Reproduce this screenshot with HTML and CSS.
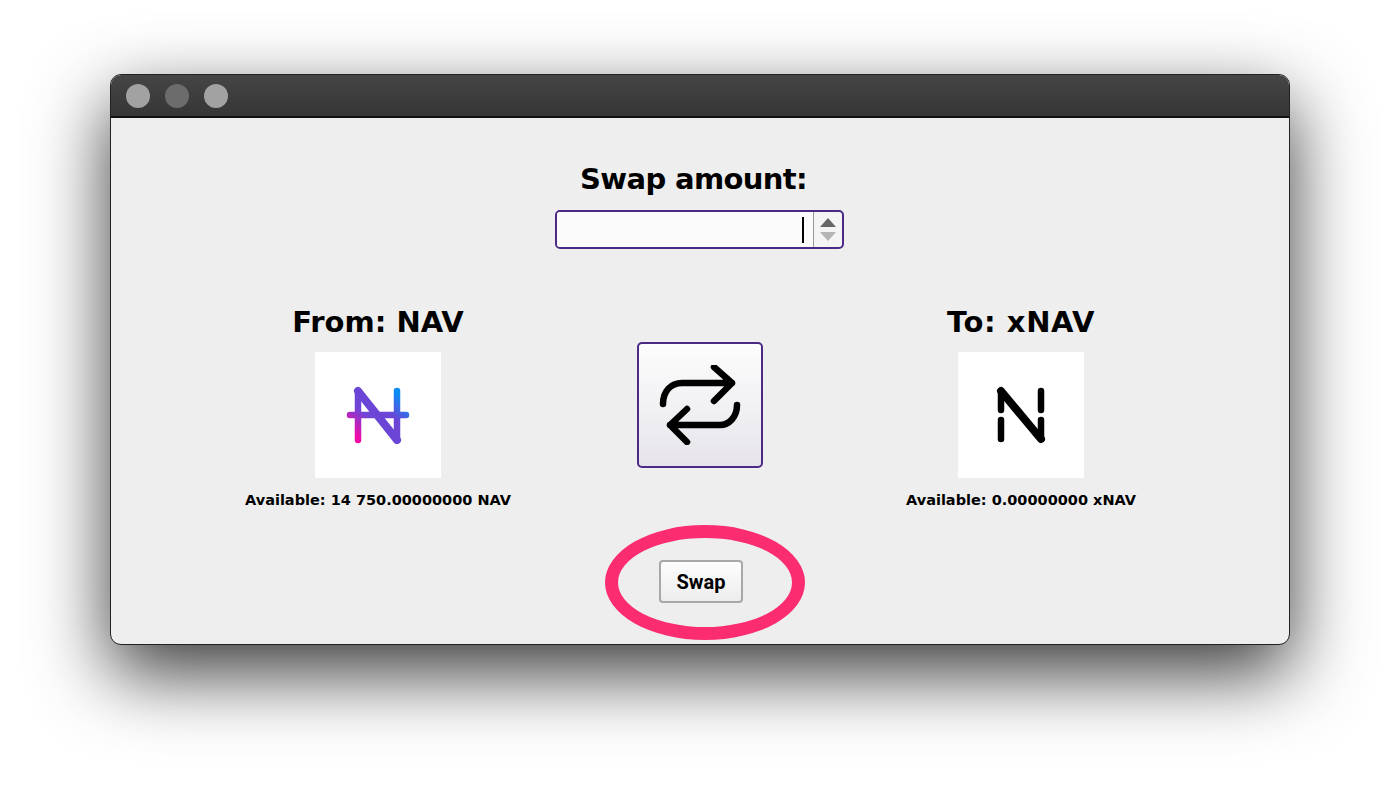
FILE: index.html
```html
<!DOCTYPE html>
<html lang="en">
<head>
  <meta charset="UTF-8" />
  <meta name="viewport" content="width=device-width, initial-scale=1.0" />
  <title>Swap</title>
  <link rel="stylesheet" href="styles.css">
</head>
<body>
  <div class="window">
    <div class="titlebar">
      <span class="dot"></span>
      <span class="dot dot-dim"></span>
      <span class="dot"></span>
    </div>
    <div class="content">
      <h2 class="amount-title">Swap amount:</h2>
      <div class="spinbox">
        <div class="spin-input"><span class="caret"></span></div>
        <div class="spin-arrows">
          <span class="arrow-up"></span>
          <span class="arrow-down"></span>
        </div>
      </div>

      <div class="coins">
        <div class="coin">
          <h2>From: NAV</h2>
          <div class="coin-logo">
            <svg width="64" height="58" viewBox="0 0 64 58">
              <defs>
                <linearGradient id="nav-grad" x1="0" y1="1" x2="1" y2="0">
                  <stop offset="0.1" stop-color="#f00aa8" />
                  <stop offset="0.4" stop-color="#6f45d6" />
                  <stop offset="0.62" stop-color="#6b45d6" />
                  <stop offset="0.9" stop-color="#0a8cf5" />
                </linearGradient>
              </defs>
              <path d="M12 5V54M51 5V54M4 29H60" fill="none" stroke="url(#nav-grad)" stroke-width="6.5" stroke-linecap="round" />
              <path d="M12 5L51 54" fill="none" stroke="#6b45d6" stroke-width="8" stroke-linecap="round" />
            </svg>
          </div>
          <p class="available">Available: 14 750.00000000 NAV</p>
        </div>

        <button class="switch-button" title="Switch">
          <svg width="84" height="80" viewBox="0 0 84 80">
            <path d="M5 39C5 26 13 18 24 18H74M56 2L74 18L56 36M79 40C79 52 71 60 62 60H12M29 44L12 60L29 77" fill="none" stroke="#000" stroke-width="6.5" stroke-linecap="round" stroke-linejoin="round" />
          </svg>
        </button>

        <div class="coin">
          <h2 class="to-title">To: xNAV</h2>
          <div class="coin-logo">
            <svg width="52" height="58" viewBox="0 0 52 58">
              <path d="M6 5V24M6 34V53M46 5V24M46 34V53" fill="none" stroke="#000" stroke-width="6.5" stroke-linecap="round" />
              <path d="M6 5L46 53" fill="none" stroke="#000" stroke-width="8" stroke-linecap="round" />
            </svg>
          </div>
          <p class="available">Available: 0.00000000 xNAV</p>
        </div>
      </div>

      <div class="swap-row">
        <button class="swap-button">Swap</button>
        <span class="ring"></span>
      </div>
    </div>
  </div>
</body>
</html>
```

FILE: styles.css
```css
body {
  margin: 0;
  height: 790px;
  overflow: hidden;
  background: #fff;
  font-family: "DejaVu Sans", sans-serif;
  color: #000;
}

.window {
  box-sizing: border-box;
  width: 1180px;
  height: 571px;
  margin: 74px 0 0 110px;
  border: 1px solid #222;
  border-radius: 11px;
  background: #eee;
  overflow: hidden;
  box-shadow: 0 28px 76px rgba(0,0,0,0.78);
}

.titlebar {
  display: flex;
  align-items: center;
  gap: 15px;
  box-sizing: border-box;
  height: 43px;
  padding: 0 0 0 15px;
  background: linear-gradient(#454545, #363636);
  border-bottom: 2px solid #111;
}
.dot { width: 24px; height: 24px; border-radius: 50%; background: #a2a2a2; }
.dot-dim { background: #6c6c6c; }

.content {
  display: flex;
  flex-direction: column;
  align-items: center;
  padding-top: 42px;
}

h2 { margin: 0; font-size: 29px; line-height: 38px; font-weight: bold; }
.amount-title { margin-left: -13px; letter-spacing: -0.65px; }
.to-title { letter-spacing: 0.6px; }

.spinbox {
  display: flex;
  box-sizing: border-box;
  width: 289px;
  height: 39px;
  margin: 12px 0 0 -2px;
  border: 2px solid #4b2a86;
  border-radius: 5px;
  background: #f4f4f4;
  overflow: hidden;
}
.spin-input {
  display: flex;
  justify-content: flex-end;
  align-items: center;
  flex: 1;
  padding-right: 9px;
  background: #fbfbfb;
  border-right: 1px solid #999;
}
.caret { width: 2px; height: 26px; background: #000; }
.spin-arrows {
  display: flex;
  flex-direction: column;
  align-items: center;
  justify-content: center;
  gap: 5px;
  width: 28px;
}
.arrow-up { border: 8px solid transparent; border-top: 0; border-bottom: 9px solid #666; }
.arrow-down { border: 8px solid transparent; border-bottom: 0; border-top: 9px solid #b5b5b5; }

.coins {
  display: flex;
  justify-content: center;
  align-items: flex-start;
  margin: 54px -1px 0 -2px;
}
.coin {
  display: flex;
  flex-direction: column;
  align-items: center;
  width: 300px;
}
.coin-logo {
  display: flex;
  align-items: center;
  justify-content: center;
  width: 126px;
  height: 126px;
  margin-top: 11px;
  background: #fff;
}
.available {
  margin: 12px 0 0;
  font-size: 14.5px;
  line-height: 21px;
  font-weight: bold;
  white-space: nowrap;
}

.switch-button {
  display: flex;
  align-items: center;
  justify-content: center;
  box-sizing: border-box;
  width: 126px;
  height: 126px;
  margin: 39px 108px 0 109px;
  padding: 0;
  border: 2px solid #4b2a86;
  border-radius: 5px;
  background: linear-gradient(#fdfdfd, #e6e4ea);
}

.swap-row {
  position: relative;
  display: flex;
  justify-content: center;
  margin: 49px 0 0 2px;
}
.swap-button {
  width: 84px;
  height: 43px;
  padding: 0;
  border: 2px solid #a8a8a8;
  border-radius: 4px;
  background: linear-gradient(#fdfdfd, #ededed);
  font-family: Roboto, sans-serif;
  font-size: 20px;
  font-weight: bold;
  color: #000;
}
.ring {
  position: absolute;
  left: -54px;
  top: -35px;
  box-sizing: border-box;
  width: 200px;
  height: 115px;
  border: 13px solid #fb2c6f;
  border-radius: 50%;
}
```
